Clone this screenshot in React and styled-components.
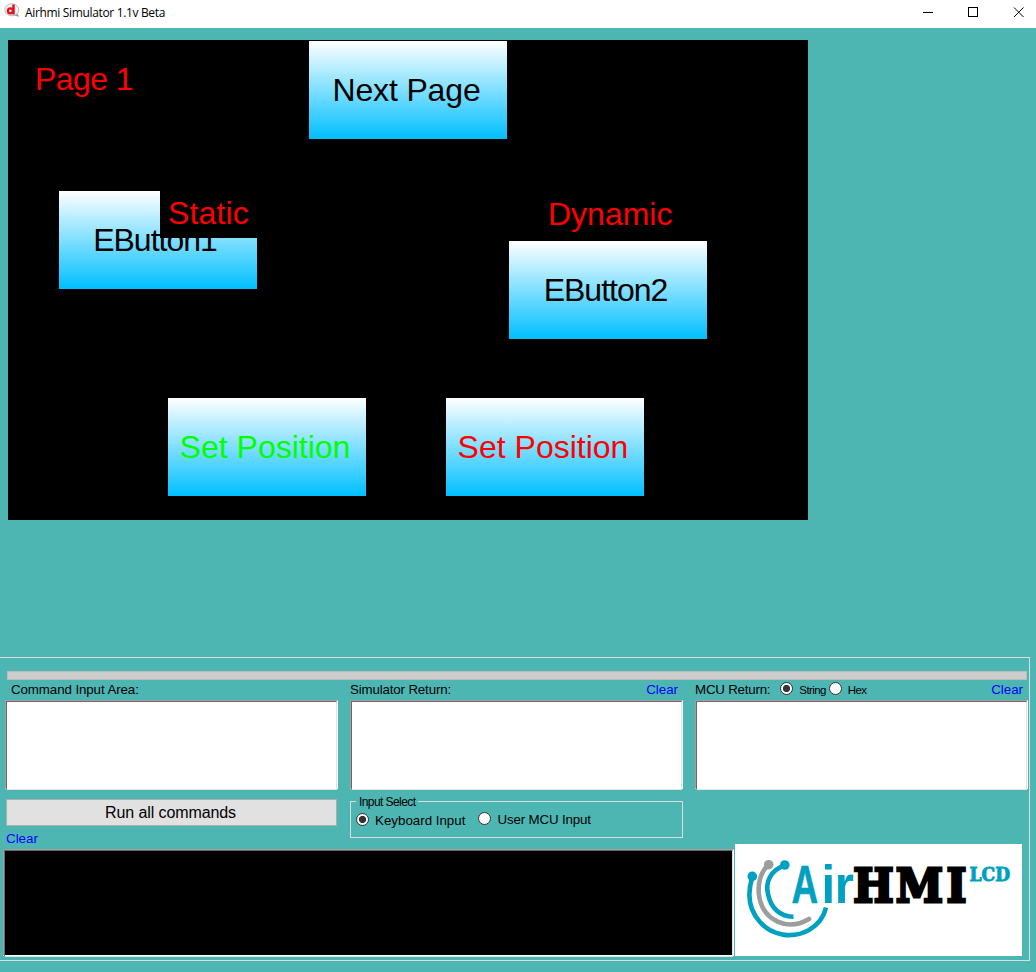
import React, { useState } from 'react';
import styled, { createGlobalStyle } from 'styled-components';

const Global = createGlobalStyle`
  * { box-sizing: border-box; }
  html, body { margin: 0; padding: 0; }
  body { background: #4db6b3; font-family: "Liberation Sans", Arial, sans-serif; color: #000; overflow: hidden; }
`;

const Window = styled.div`
  width: 1036px;
  height: 972px;
  display: flex;
  flex-direction: column;
  background: #4db6b3;
`;

const TitleBar = styled.header`
  height: 28px;
  flex: none;
  display: flex;
  align-items: center;
  background: #fff;
  padding-left: 4px;
`;

const AppIcon = styled.svg`
  display: block;
  width: 17px;
  height: 16px;
  margin-bottom: 6px;
`;

const Title = styled.h1`
  margin: 0 0 2px 4px;
  flex: 1;
  font: 400 12px/16px "Open Sans", "Noto Sans", sans-serif;
  letter-spacing: -0.34px;
`;

const Controls = styled.svg`
  display: block;
  width: 131px;
  height: 28px;
`;

const Screen = styled.main`
  position: relative;
  width: 800px;
  height: 480px;
  flex: none;
  margin: 12px 0 137px 8px;
  background: #000;
  font-size: 32px;
`;

const ScreenButton = styled.button`
  position: absolute;
  left: ${(p) => p.$x}px;
  top: ${(p) => p.$y}px;
  width: 198px;
  height: 98px;
  padding: 0 ${(p) => p.$inset || 0}px 0 0;
  border: 0;
  font: 32px/36px "Liberation Sans", Arial, sans-serif;
  letter-spacing: ${(p) => p.$track || 0}px;
  white-space: nowrap;
  color: ${(p) => p.$color || '#000'};
  background: linear-gradient(#fff, #00bfff);
`;

const ScreenLabel = styled.div`
  position: absolute;
  left: ${(p) => p.$x}px;
  top: ${(p) => p.$y}px;
  width: ${(p) => p.$w}px;
  height: 47px;
  padding-left: 8px;
  line-height: 45px;
  letter-spacing: ${(p) => p.$track || 0}px;
  white-space: nowrap;
  color: #f00;
  background: #000;
`;

const Panel = styled.section`
  width: 1030px;
  height: 304px;
  flex: none;
  border: 1px solid #dcdcdc;
  border-left: 0;
  padding-top: 13px;
`;

const Progress = styled.div`
  width: 1020px;
  height: 9px;
  margin-left: 7px;
  background: #ccc;
  border: 1px solid #bcbcbc;
`;

const Columns = styled.div`
  display: grid;
  grid-template-columns: repeat(3, 333px);
  column-gap: 12px;
  padding-left: 5px;
`;

const Heading = styled.div`
  height: 20px;
  display: flex;
  align-items: center;
  padding: 0 5px 1px ${(p) => p.$left || 0}px;
  font-size: 13.33px;
  letter-spacing: ${(p) => p.$track || 0}px;
  white-space: nowrap;
`;

const ClearLink = styled.a`
  color: #00f;
  font-size: 13.33px;
  letter-spacing: 0;
  margin-left: ${(p) => (p.$push ? 'auto' : '0')};
`;

const Sunken = styled.div`
  height: ${(p) => p.$h}px;
  width: ${(p) => p.$w}px;
  background: ${(p) => p.$bg || '#fff'};
  border: 1px solid;
  border-color: #a0a0a0 #fff #fff #a0a0a0;
  &::before {
    content: '';
    display: block;
    height: 100%;
    border: 1px solid;
    border-color: #696969 #e3e3e3 #e3e3e3 #696969;
  }
`;

const RunButton = styled.button`
  display: block;
  width: 331px;
  height: 27px;
  margin: 10px 0 0 1px;
  padding: 0 2px 0 0;
  border: 1px solid #adadad;
  background: #e1e1e1;
  color: #000;
  font: 16px/18px "Liberation Sans", Arial, sans-serif;
  letter-spacing: -0.1px;
`;

const InputGroup = styled.fieldset`
  width: 333px;
  height: 44px;
  margin: 5px 0 0;
  padding: 0 0 0 5px;
  min-width: 0;
  border: 1px solid #dcdcdc;
`;

const Legend = styled.legend`
  padding: 1px 3px 0;
  font-size: 12px;
  line-height: 14px;
  letter-spacing: -0.58px;
`;

const Choices = styled.div`
  display: flex;
  gap: 13px;
  margin-top: 2px;
`;

const Choice = styled.label`
  display: flex;
  align-items: center;
  height: 18px;
  margin-top: ${(p) => (p.$raised ? '-1px' : '0')};
  font-size: ${(p) => (p.$small ? '11.5px' : '13.33px')};
  letter-spacing: ${(p) => p.$track || 0}px;
  margin-left: ${(p) => p.$left || 0}px;
`;

const Dot = styled.span`
  width: 13px;
  height: 13px;
  flex: none;
  margin: 0 6px 2px 0;
  border: 1px solid #333;
  border-radius: 50%;
  background: ${(p) => (p.$on ? 'radial-gradient(circle, #333 3.3px, #fff 3.9px)' : '#fff')};
`;

const ConsoleHead = styled.div`
  height: 23px;
  display: flex;
  align-items: center;
  padding: 1px 0 0 1px;
`;

const Bottom = styled.div`
  display: flex;
  align-items: flex-end;
  gap: 1px;
  padding-left: 3px;
  margin-top: -5px;
`;

const LogoCard = styled.div`
  width: 287px;
  height: 112px;
  background: #fff;
`;

function Radio({ on, onPick, children, ...rest }) {
  return (
    <Choice onClick={onPick} {...rest}>
      <Dot $on={on} />
      {children}
    </Choice>
  );
}

function Logo() {
  return (
    <svg width="287" height="112" viewBox="0 0 287 112">
      <g fill="none" strokeWidth="4.6">
        <path d="M17.3 33C12 50 14 66 25 78C37 92 58 95 74 86C84 80 89 73 91 63.5" stroke="#00a0c1" />
        <path d="M33.5 21C25 28 22 42 24.5 54C29 76 52 88 74 75" stroke="#9c9d9d" strokeLinecap="round" />
        <path d="M49.5 21.5C36 26 30 38 33 50C36 65 46 73 58.5 72.7" stroke="#00a0c1" />
      </g>
      <circle cx="17.3" cy="32.4" r="4.8" fill="#00a0c1" />
      <circle cx="33.7" cy="20.7" r="4.8" fill="#9c9d9d" />
      <circle cx="49.8" cy="21" r="4.8" fill="#00a0c1" />
      <text x="131.5 178.5 235" y="58.3" transform="scale(.9 1)" fontFamily="DejaVu Serif" fontWeight="700" fontSize="47.5" stroke="#000" strokeWidth="3">HMI</text>
      <g fill="#00a0c1" fontFamily="Liberation Sans" fontWeight="700" fontSize="53.5">
        <text x="82" y="59.3" transform="scale(.69 1)" stroke="#00a0c1" strokeWidth="0.6">A</text>
        <text x="94 108.4" y="59.3" transform="scale(.92 1)">ir</text>
      </g>
      <text x="234.5" y="36.5" fill="#00a0c1" fontFamily="DejaVu Serif" fontWeight="700" fontSize="18" textLength="40.5" lengthAdjust="spacingAndGlyphs" stroke="#00a0c1" strokeWidth="0.9">LCD</text>
    </svg>
  );
}

export default function App() {
  const [format, setFormat] = useState('string');
  const [source, setSource] = useState('keyboard');
  return (
    <>
      <Global />
      <Window>
        <TitleBar>
          <AppIcon viewBox="0 0 17 16">
            <path d="M10 12.5L15.2 13.8L13.5 10.5" fill="#999" />
            <ellipse cx="7.8" cy="6.8" rx="7" ry="6" fill="#f4f4f4" stroke="#bbb" />
            <circle cx="6.4" cy="7.8" r="2.5" fill="none" stroke="#e3101c" strokeWidth="2.3" />
            <path d="M9.5 1.5V11.5" stroke="#e3101c" strokeWidth="2.5" />
          </AppIcon>
          <Title>Airhmi Simulator 1.1v Beta</Title>
          <Controls viewBox="0 0 131 28" fill="none" stroke="#000">
            <path d="M18 12.5H28" />
            <rect x="63.5" y="7.5" width="9" height="9" />
            <path d="M109 7.5L118.5 17M118.5 7.5L109 17" />
          </Controls>
        </TitleBar>
        <Screen>
          <ScreenLabel $x={19} $y={17} $w={120} $track={-0.6}>Page 1</ScreenLabel>
          <ScreenButton $x={301} $y={1} $inset={3} $track={-0.15}>Next Page</ScreenButton>
          <ScreenButton $x={51} $y={151} $inset={6} $track={-1}>EButton1</ScreenButton>
          <ScreenLabel $x={152} $y={151} $w={100} $track={0.15}>Static</ScreenLabel>
          <ScreenLabel $x={532} $y={152} $w={150}>Dynamic</ScreenLabel>
          <ScreenButton $x={501} $y={201} $inset={5} $track={-1}>EButton2</ScreenButton>
          <ScreenButton $x={160} $y={358} $inset={4} $color="#0f0">Set Position</ScreenButton>
          <ScreenButton $x={438} $y={358} $inset={4} $color="#f00">Set Position</ScreenButton>
        </Screen>
        <Panel>
          <Progress />
          <Columns>
            <div>
              <Heading $left={6} $track={-0.1}>Command Input Area:</Heading>
              <Sunken $h={89} $w={333} />
              <RunButton>Run all commands</RunButton>
              <ConsoleHead><ClearLink>Clear</ClearLink></ConsoleHead>
            </div>
            <div>
              <Heading $track={-0.16}>Simulator Return:<ClearLink $push>Clear</ClearLink></Heading>
              <Sunken $h={89} $w={333} />
              <InputGroup>
                <Legend>Input Select</Legend>
                <Choices>
                  <Radio on={source === 'keyboard'} onPick={() => setSource('keyboard')}>Keyboard Input</Radio>
                  <Radio $raised $track={-0.15} on={source === 'mcu'} onPick={() => setSource('mcu')}>User MCU Input</Radio>
                </Choices>
              </InputGroup>
            </div>
            <div>
              <Heading $track={-0.22}>
                MCU Return:
                <Radio $small $left={10} $track={-0.6} on={format === 'string'} onPick={() => setFormat('string')}>String</Radio>
                <Radio $small $left={3} $track={-0.6} on={format === 'hex'} onPick={() => setFormat('hex')}>Hex</Radio>
                <ClearLink $push>Clear</ClearLink>
              </Heading>
              <Sunken $h={89} $w={333} />
            </div>
          </Columns>
          <Bottom>
            <Sunken $h={107} $w={731} $bg="#000" />
            <LogoCard><Logo /></LogoCard>
          </Bottom>
        </Panel>
      </Window>
    </>
  );
}
